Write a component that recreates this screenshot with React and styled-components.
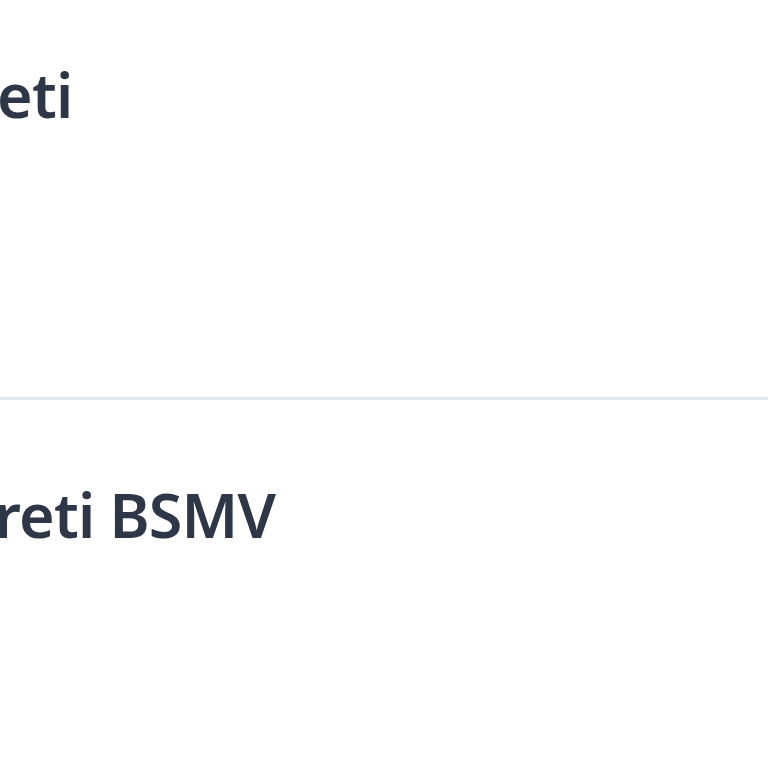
import styled, { createGlobalStyle } from 'styled-components';

const Global = createGlobalStyle`
  html, body {
    margin: 0;
    padding: 0;
    background: #ffffff;
    overflow: hidden;
  }
`;

const Table = styled.div`
  width: 768px;
  height: 768px;
  overflow: hidden;
  display: flex;
  flex-direction: column;
  font-family: "Noto Sans", "Open Sans", sans-serif;
`;

const Row = styled.div`
  flex: 0 0 auto;
  height: 420px;
  box-sizing: border-box;
  padding-top: 79px;
  border-top: 3px solid #e2e8f0;
  margin-top: ${(p) => p.$offset || 0}px;
`;

const Label = styled.div`
  font-size: 61px;
  line-height: 72px;
  font-weight: 600;
  letter-spacing: -0.8px;
  color: #2d3748;
  white-space: nowrap;
  margin-left: ${(p) => p.$shift}px;
`;

const rows = [
  { text: 'Ücreti', shift: -102 },
  { text: 'Ücreti BSMV', shift: -80 },
];

function App() {
  return (
    <>
      <Global />
      <Table>
        {rows.map((r, i) => (
          <Row key={i} $offset={i === 0 ? -23 : 0}>
            <Label $shift={r.shift}>{r.text}</Label>
          </Row>
        ))}
      </Table>
    </>
  );
}

export default App;
